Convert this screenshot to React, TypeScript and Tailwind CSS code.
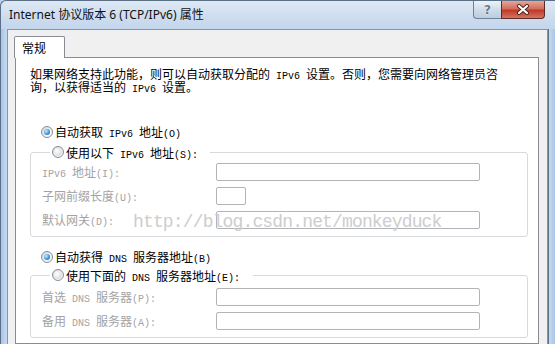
import { ReactNode } from 'react';

// SimSun-style half-width Latin runs: 10px mono gives the 6px advance
const M = ({ children }: { children: ReactNode }) => (
  <span className="font-['Liberation_Mono',monospace] text-[10px] leading-[0px]">{children}</span>
);

const Radio = ({ checked }: { checked?: boolean }) => (
  <span className="w-[12px] h-[12px] shrink-0 rounded-full border border-[#8a8d90] bg-[linear-gradient(135deg,#d6d9dc,#ffffff)] flex items-center justify-center">
    {checked ? (
      <span className="w-[6px] h-[6px] rounded-full bg-[radial-gradient(circle_at_35%_35%,#c8eeff_0%,#3f98de_55%,#1a5a9c_100%)]" />
    ) : (
      <span className="w-[8px] h-[8px] rounded-full bg-[radial-gradient(circle_at_35%_35%,#ffffff,#cdd1d5)]" />
    )}
  </span>
);

const RadioRow = ({ checked, children }: { checked?: boolean; children: ReactNode }) => (
  <div className="flex items-center gap-[2px] h-[13px] leading-[13px] whitespace-nowrap">
    <Radio checked={checked} />
    <span>{children}</span>
  </div>
);

const Field = ({ label, small }: { label: ReactNode; small?: boolean }) => (
  <div className="flex items-center h-[18px]">
    <span className="w-[174px] leading-[14px] text-[#a3a3a3] whitespace-nowrap">{label}</span>
    <span
      className={`h-[18px] ${small ? 'w-[30px]' : 'w-[264px]'} border border-[#b2b5b8] rounded-[2px] bg-white`}
    />
  </div>
);

const Group = ({ legend, legendWidth, children }: { legend: ReactNode; legendWidth: string; children: ReactNode }) => (
  <fieldset className="border border-[#d7d9dc] rounded-[3px] pl-[11px] pb-[7px]">
    <legend className={`ml-[8px] pl-[2px] h-[14px] flex items-center bg-white ${legendWidth}`}>
      <RadioRow>{legend}</RadioRow>
    </legend>
    {children}
  </fieldset>
);

const HelpButton = () => (
  <div className="w-[28px] h-[18px] rounded-bl-[4px] border border-t-0 border-r-0 border-[#6f8299] bg-[linear-gradient(180deg,#edf3f9,#cfdcea_50%,#bccde0)] flex items-center justify-center">
    <span className="font-['DejaVu_Sans',sans-serif] text-[12px] leading-none font-bold text-[#6b7a8a] [text-shadow:0_0_2px_#ffffff]">?</span>
  </div>
);

const CloseButton = () => (
  <div className="w-[44px] h-[18px] rounded-br-[4px] border border-t-0 border-[#5d2a27] bg-[linear-gradient(180deg,#e7a597,#d26e5c_45%,#c0392b_55%,#d2765f)] flex items-center justify-center">
    <svg width="14" height="11" viewBox="0 0 14 11">
      <path d="M3 2 L11 9 M11 2 L3 9" stroke="#4a1f1c" strokeWidth="4" strokeLinecap="round" />
      <path d="M3 2 L11 9 M11 2 L3 9" stroke="#ffffff" strokeWidth="2.2" strokeLinecap="round" />
    </svg>
  </div>
);

export default function App() {
  return (
    <div className="relative w-[555px] h-[344px] overflow-hidden flex flex-col bg-[#bcd3ec] font-['Noto_Sans_CJK_SC',sans-serif] text-[12px] text-black">
      {/* Title bar */}
      <div className="h-[29px] shrink-0 flex items-start justify-between pl-[8px] pr-[10px] rounded-tl-[6px] border-t border-l border-[#5b6f86] bg-[linear-gradient(180deg,#dfe9f5,#cddcee_60%,#c3d6ec)]">
        <span className="pt-[6px] font-['Noto_Sans','Noto_Sans_CJK_SC',sans-serif] text-[12px] leading-[16px] text-[#111]">
          Internet 协议版本 6 (TCP/IPv6) 属性
        </span>
        <div className="flex">
          <HelpButton />
          <CloseButton />
        </div>
      </div>

      <div className="flex flex-1 min-h-0">
        <div className="w-[7px] border-l border-[#5b6f86] bg-[linear-gradient(90deg,#a9c5e6,#c6dbf1)]" />

        {/* Client area */}
        <div className="flex-1 flex flex-col pt-[6px] bg-[#f0f0f0] border-l border-t border-r border-[#8396ad]">
          <div className="ml-[6px] w-[51px] h-[22px] -mb-[1px] relative z-10 flex items-center pl-[7px] bg-white border border-b-0 border-[#898c95] rounded-t-[2px]">
            常规
          </div>

          <div className="flex-1 ml-[7px] mr-[8px] pl-[14px] pr-[10px] pt-[9px] bg-white border border-[#898c95]">
            <p className="leading-[13px] whitespace-nowrap">
              如果网络支持此功能，则可以自动获取分配的<M> IPv6 </M>设置。否则，您需要向网络管理员咨
              <br />
              询，以获得适当的<M> IPv6 </M>设置。
            </p>

            <div className="mt-[32px] ml-[11px]">
              <RadioRow checked>
                自动获取<M> IPv6 </M>地址<M>(O)</M>
              </RadioRow>
            </div>

            <div className="mt-[7px]">
              <Group legendWidth="w-[160px]" legend={<>使用以下<M> IPv6 </M>地址<M>(S):</M></>}>
                <div className="mt-[4px] flex flex-col gap-[6px]">
                  <Field label={<><M>IPv6 </M>地址<M>(I):</M></>} />
                  <Field small label={<>子网前缀长度<M>(U):</M></>} />
                  <Field label={<>默认网关<M>(D):</M></>} />
                </div>
              </Group>
            </div>

            <div className="mt-[13px] ml-[11px]">
              <RadioRow checked>
                自动获得<M> DNS </M>服务器地址<M>(B)</M>
              </RadioRow>
            </div>

            <div className="mt-[5px]">
              <Group legendWidth="w-[203px]" legend={<>使用下面的<M> DNS </M>服务器地址<M>(E):</M></>}>
                <div className="mt-[6px] flex flex-col gap-[6px]">
                  <Field label={<>首选<M> DNS </M>服务器<M>(P):</M></>} />
                  <Field label={<>备用<M> DNS </M>服务器<M>(A):</M></>} />
                </div>
              </Group>
            </div>
          </div>
        </div>

        <div className="w-[7px] border-l border-[#5b6f86] bg-[linear-gradient(90deg,#c6dbf1,#a9c5e6)]" />
      </div>

      {/* Watermark */}
      <span className="absolute left-[133px] top-[212px] pointer-events-none font-['Liberation_Mono',monospace] text-[18px] leading-[20px] tracking-[-0.85px] text-[#cdcdcd]">
        http://blog.csdn.net/monkeyduck
      </span>
    </div>
  );
}
